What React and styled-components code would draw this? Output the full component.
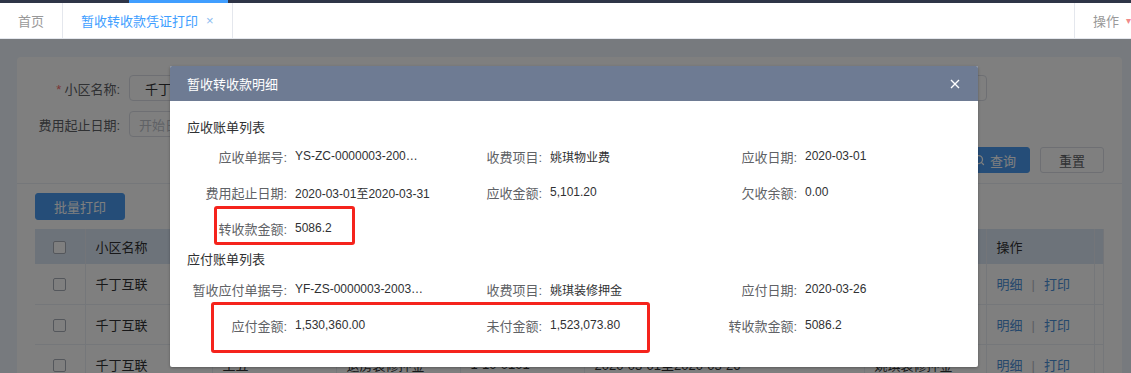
import React from "react";
import styled, { createGlobalStyle } from "styled-components";
import { Search } from "lucide-react";

const GlobalStyle = createGlobalStyle`
  html, body {
    margin: 0;
    padding: 0;
  }
  body {
    font-family: "Liberation Sans", "Noto Sans CJK SC", sans-serif;
    font-size: 13px;
    color: #303133;
    background: #fff;
    overflow: hidden;
  }
  * {
    box-sizing: border-box;
  }
`;

const Shell = styled.div`
  width: 1131px;
  height: 373px;
  display: flex;
  flex-direction: column;
  overflow: hidden;
`;

const TopStrip = styled.div`
  height: 3px;
  flex-shrink: 0;
  display: flex;
  padding-left: 129px;
  background: #2f3547;
`;

const StripMark = styled.span`
  width: 99px;
  background: #409eff;
`;

const TabBar = styled.div`
  height: 36px;
  flex-shrink: 0;
  display: flex;
  background: #fff;
  border-bottom: 1px solid #e4e7ed;
`;

const Tab = styled.div`
  display: flex;
  align-items: center;
  gap: 8px;
  padding: 0 18px;
  border-right: 1px solid #e4e7ed;
  color: ${(p) => (p.$active ? "#409eff" : "#999")};
  font-size: 13px;
  white-space: nowrap;
`;

const TabClose = styled.span`
  font-size: 13px;
  color: #8cbcf0;
`;

const TabAction = styled.div`
  margin-left: auto;
  display: flex;
  align-items: center;
  gap: 7px;
  padding-left: 18px;
  border-left: 1px solid #e4e7ed;
  color: #999;
  font-size: 13px;
  white-space: nowrap;
`;

const Caret = styled.span`
  font-size: 10px;
  color: #f08a8a;
`;

const Main = styled.div`
  flex: 1;
  position: relative;
  overflow: hidden;
  background: #eef5fc;
  padding: 18px 9px 0 17px;
`;

const Card = styled.div`
  background: #fff;
  border-radius: 4px;
  padding: 18px 18px 0;
  height: 400px;
`;

const FormRow = styled.div`
  display: flex;
  height: 26px;
  margin-bottom: 10px;
  justify-content: ${(p) => (p.$end ? "flex-end" : "flex-start")};
  gap: ${(p) => (p.$end ? "10px" : "5px")};
`;

const FormItem = styled.div`
  display: flex;
  align-items: center;
  width: 314px;
`;

const FormLabel = styled.label`
  width: 94px;
  padding-right: 9px;
  text-align: right;
  color: #606266;
  font-size: 13px;
  white-space: nowrap;
  b {
    color: #f56c6c;
    font-weight: normal;
    margin-right: 3px;
  }
`;

const Input = styled.div`
  width: 220px;
  height: 26px;
  display: flex;
  align-items: center;
  padding: 0 15px;
  border: 1px solid #dcdfe6;
  border-radius: 4px;
  color: ${(p) => (p.$placeholder ? "#c0c4cc" : "#303133")};
  font-size: 13px;
  white-space: nowrap;
  overflow: hidden;
  padding-left: ${(p) => (p.$placeholder ? "9px" : "15px")};
`;

const Button = styled.button`
  height: ${(p) => (p.$tall ? "27px" : "26px")};
  width: ${(p) => p.$w}px;
  display: flex;
  align-items: center;
  justify-content: center;
  gap: 5px;
  border-radius: 3px;
  border: 1px solid ${(p) => (p.$primary ? "#4a9bf0" : "#dcdfe6")};
  background: ${(p) => (p.$primary ? "#4a9bf0" : "#fff")};
  color: ${(p) => (p.$primary ? "#fff" : "#606266")};
  font-family: inherit;
  font-size: 13px;
  padding: 0;
`;

const Divider = styled.div`
  height: 1px;
  margin: 0 -18px;
  background: #ebeef5;
`;

const Toolbar = styled.div`
  padding: 9px 0;
`;

const Table = styled.table`
  width: 1068px;
  border-collapse: collapse;
  table-layout: fixed;
  font-size: 13px;
`;

const Th = styled.th`
  height: 35px;
  background: #dbe7f4;
  color: #303133;
  font-weight: normal;
  text-align: ${(p) => (p.$center ? "center" : "left")};
  padding: 0 10px;
  border-right: 1px solid #e6ebf2;
`;

const Td = styled.td`
  height: 40px;
  padding: 0 10px;
  text-align: ${(p) => (p.$center ? "center" : "left")};
  border-right: 1px solid #ebeef5;
  border-bottom: 1px solid #ebeef5;
  color: #303133;
  white-space: nowrap;
  overflow: hidden;
`;

const Check = styled.span`
  display: inline-block;
  width: 13px;
  height: 13px;
  border: 1px solid #a9aeb8;
  border-radius: 2px;
  background: #fff;
  vertical-align: middle;
`;

const LinkText = styled.span`
  color: #4a90d9;
`;

const Sep = styled.span`
  color: #b8bcc4;
  margin: 0 9px;
`;

const Mask = styled.div`
  position: absolute;
  inset: 0;
  background: rgba(0, 0, 0, 0.5);
`;

const Dialog = styled.div`
  position: absolute;
  left: 170px;
  top: 27px;
  width: 808px;
  background: #fff;
  border-radius: 2px;
  box-shadow: 0 1px 3px rgba(0, 0, 0, 0.3);
  overflow: hidden;
`;

const DialogHead = styled.div`
  height: 35px;
  display: flex;
  align-items: center;
  justify-content: space-between;
  padding: 0 18px 0 17px;
  background: #6e7b93;
  color: #fff;
  font-size: 13px;
`;

const CloseBtn = styled.svg`
  width: 10px;
  height: 10px;
`;

const DialogBody = styled.div`
  padding: 17px 26px 24px 17px;
`;

const SectionTitle = styled.div`
  height: 20px;
  line-height: 20px;
  font-size: 13px;
  color: #303133;
  margin-top: ${(p) => (p.$second ? "4px" : "0")};
  margin-bottom: ${(p) => (p.$second ? "1px" : "0")};
`;

const InfoRow = styled.div`
  position: relative;
  display: grid;
  grid-template-columns: repeat(3, 255px);
  height: 36px;
`;

const Field = styled.div`
  display: flex;
  align-items: center;
  min-width: 0;
`;

const FieldLabel = styled.span`
  width: 100px;
  flex-shrink: 0;
  text-align: right;
  color: #606266;
  font-size: 13px;
  white-space: nowrap;
`;

const FieldValue = styled.span`
  margin-left: 8px;
  font-size: 12px;
  color: #303133;
  white-space: nowrap;
  ${(p) =>
    p.$clip &&
    `
    width: 128.7px;
    overflow: hidden;
    text-overflow: ellipsis;
  `}
`;

const Highlight = styled.div`
  position: absolute;
  left: ${(p) => p.$left}px;
  top: ${(p) => p.$top}px;
  width: ${(p) => p.$w}px;
  height: ${(p) => p.$h}px;
  border: 3px solid #f5231c;
  border-radius: 3px;
  pointer-events: none;
`;

const rows = [
  ["千丁互联", "1-1-101", "王五", "1,073.09", "2020-03-01至2020-03-26", "姚琪装修押金"],
  ["千丁互联", "1-1-102", "李四", "退房装修押金", "2020-03-01至2020-03-26", "姚琪装修押金"],
  ["千丁互联", "王五", "退房装修押金", "1-10-0101", "2020-03-01至2020-03-26", "姚琪装修押金"],
];

// [label, value, clip long value with ellipsis]
const receivable = [
  [
    ["应收单据号:", "YS-ZC-0000003-20030101-001", true],
    ["收费项目:", "姚琪物业费"],
    ["应收日期:", "2020-03-01"],
  ],
  [
    ["费用起止日期:", "2020-03-01至2020-03-31"],
    ["应收金额:", "5,101.20"],
    ["欠收余额:", "0.00"],
  ],
  [["转收款金额:", "5086.2"]],
];

const payable = [
  [
    ["暂收应付单据号:", "YF-ZS-0000003-20032601-001", true],
    ["收费项目:", "姚琪装修押金"],
    ["应付日期:", "2020-03-26"],
  ],
  [
    ["应付金额:", "1,530,360.00"],
    ["未付金额:", "1,523,073.80"],
    ["转收款金额:", "5086.2"],
  ],
];

const renderFields = (list) =>
  list.map(([label, value, clip]) => (
    <Field key={label}>
      <FieldLabel>{label}</FieldLabel>
      <FieldValue $clip={clip}>{value}</FieldValue>
    </Field>
  ));

const App = () => {
  return (
    <>
      <GlobalStyle />
      <Shell>
        <TopStrip>
          <StripMark />
        </TopStrip>
        <TabBar>
          <Tab>首页</Tab>
          <Tab $active>
            暂收转收款凭证打印
            <TabClose>×</TabClose>
          </Tab>
          <TabAction>
            操作
            <Caret>▾</Caret>
          </TabAction>
        </TabBar>
        <Main>
          <Card>
            <FormRow>
              <FormItem>
                <FormLabel>
                  <b>*</b>小区名称:
                </FormLabel>
                <Input>千丁互联</Input>
              </FormItem>
              <FormItem>
                <FormLabel>房号:</FormLabel>
                <Input $placeholder>请选择</Input>
              </FormItem>
              <FormItem>
                <FormLabel>客户名称:</FormLabel>
                <Input $placeholder>请输入</Input>
              </FormItem>
            </FormRow>
            <FormRow>
              <FormItem>
                <FormLabel>费用起止日期:</FormLabel>
                <Input $placeholder>开始日期 至 结束日期</Input>
              </FormItem>
            </FormRow>
            <FormRow $end>
              <Button $primary $w={71}>
                <Search size={12} strokeWidth={2.5} />
                查询
              </Button>
              <Button $w={64}>重置</Button>
            </FormRow>
            <Divider />
            <Toolbar>
              <Button $primary $tall $w={90}>
                批量打印
              </Button>
            </Toolbar>
            <Table>
              <colgroup>
                <col width="50" />
                <col width="127" />
                <col width="124" />
                <col width="124" />
                <col width="124" />
                <col width="280" />
                <col width="122" />
                <col width="108" />
                <col width="9" />
              </colgroup>
              <thead>
                <tr>
                  <Th $center>
                    <Check />
                  </Th>
                  <Th>小区名称</Th>
                  <Th>房号</Th>
                  <Th>客户名称</Th>
                  <Th>应收金额</Th>
                  <Th>费用起止日期</Th>
                  <Th>收费项目</Th>
                  <Th>操作</Th>
                  <Th />
                </tr>
              </thead>
              <tbody>
                {rows.map((r, i) => (
                  <tr key={i}>
                    <Td $center>
                      <Check />
                    </Td>
                    {r.map((c, j) => (
                      <Td key={j}>{c}</Td>
                    ))}
                    <Td>
                      <LinkText>明细</LinkText>
                      <Sep>|</Sep>
                      <LinkText>打印</LinkText>
                    </Td>
                    <Td />
                  </tr>
                ))}
              </tbody>
            </Table>
          </Card>
          <Mask />
          <Dialog>
            <DialogHead>
              <span>暂收转收款明细</span>
              <CloseBtn viewBox="0 0 10 10">
                <path d="M1 1 L9 9 M9 1 L1 9" stroke="#fff" strokeWidth="1.4" />
              </CloseBtn>
            </DialogHead>
            <DialogBody>
              <SectionTitle>应收账单列表</SectionTitle>
              {receivable.map((row, i) => (
                <InfoRow key={i}>
                  {renderFields(row)}
                  {i === 2 && <Highlight $left={27} $top={-4} $w={141} $h={39} />}
                </InfoRow>
              ))}
              <SectionTitle $second>应付账单列表</SectionTitle>
              {payable.map((row, i) => (
                <InfoRow key={i}>
                  {renderFields(row)}
                  {i === 1 && <Highlight $left={24} $top={-5} $w={439} $h={51} />}
                </InfoRow>
              ))}
            </DialogBody>
          </Dialog>
        </Main>
      </Shell>
    </>
  );
};

export default App;
